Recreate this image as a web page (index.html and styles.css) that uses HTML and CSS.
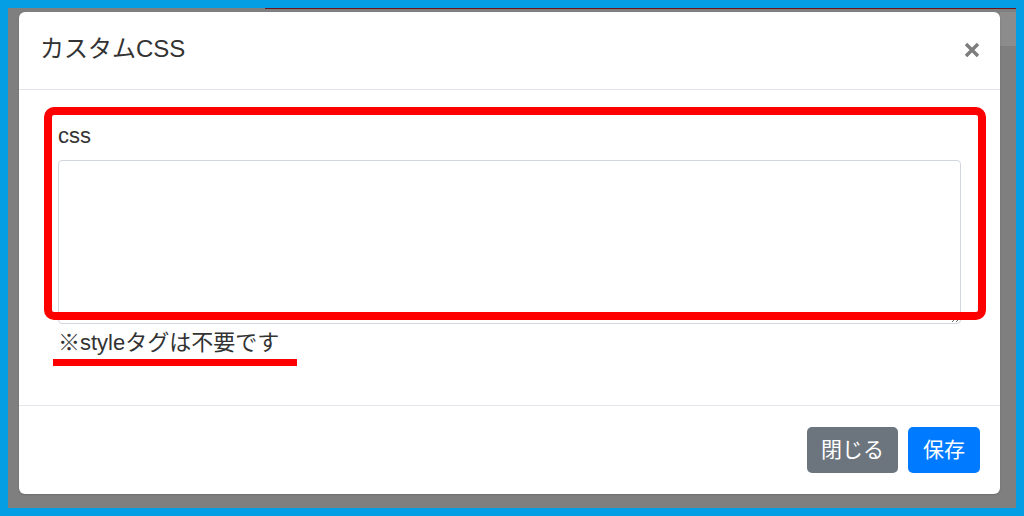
FILE: index.html
```html
<!DOCTYPE html>
<html lang="ja">
<head>
<meta charset="utf-8">
<title>カスタムCSS</title>
<link rel="stylesheet" href="styles.css">
</head>
<body>
<div class="frame">
  <div class="backdrop">
    <div class="modal">
      <div class="modal-header">
        <h5 class="modal-title">カスタムCSS</h5>
        <button class="close" type="button" aria-label="Close">
          <svg width="16" height="16" viewBox="0 0 16 16"><path d="M2 2 L14 14 M14 2 L2 14" stroke="#7d7d7d" stroke-width="3.4" stroke-linecap="butt"/></svg>
        </button>
      </div>
      <div class="modal-body">
        <label class="field-label" for="css">css</label>
        <textarea id="css" class="form-control"></textarea>
        <p class="note">※styleタグは不要です</p>
        <div class="mark-box"></div>
        <div class="mark-line"></div>
      </div>
      <div class="modal-footer">
        <button class="btn btn-secondary" type="button">閉じる</button>
        <button class="btn btn-primary" type="button">保存</button>
      </div>
    </div>
  </div>
</div>
</body>
</html>
```

FILE: styles.css
```css
* { box-sizing: border-box; }
html, body { margin: 0; padding: 0; }
body {
  width: 1024px;
  height: 516px;
  background: #049ee4;
  font-family: "Liberation Sans", "Noto Sans CJK JP", sans-serif;
  color: #212529;
  overflow: hidden;
}
.frame {
  padding: 8px;
  height: 516px;
}
.backdrop {
  height: 500px;
  background:
    linear-gradient(#6e1414, #6e1414) no-repeat 257px 0 / 760px 1px,
    linear-gradient(#8c8c8c, #8c8c8c) no-repeat 992px 4px / 16px 34px,
    #7f7f7f;
  padding: 4px 16px 14px 11px;
}
.modal {
  background: #fff;
  border-radius: 6px;
  width: 981px;
  height: 482px;
  display: flex;
  flex-direction: column;
  box-shadow: 0 1px 2px rgba(0,0,0,0.15);
}
.modal-header {
  height: 78px;
  border-bottom: 1px solid #e3e4ea;
  display: flex;
  align-items: center;
  justify-content: space-between;
  padding: 0 20px 0 21px;
}
.modal-title {
  margin: 0;
  font-size: 24px;
  font-weight: 400;
  line-height: 1.2;
  color: #333;
  padding-bottom: 2px;
}
.close {
  border: 0;
  background: none;
  padding: 0;
  width: 17px;
  height: 17px;
  display: flex;
  align-items: center;
  justify-content: center;
  margin-top: -2px;
  cursor: pointer;
}
.modal-body {
  position: relative;
  flex: 1;
  padding: 29px 39px 0 39px;
  display: flex;
  flex-direction: column;
  border-bottom: 1px solid #e3e6ea;
}
.field-label {
  font-size: 22px;
  line-height: 33px;
  color: #333;
  margin-bottom: 8px;
}
.form-control {
  display: block;
  width: 100%;
  height: 164px;
  border: 1px solid #d2d6e0;
  border-radius: 4px;
  padding: 6px 12px;
  font: inherit;
  resize: vertical;
  background: #fff;
}
.note {
  margin: 2px 0 0 0;
  font-size: 22px;
  line-height: 33px;
  color: #333;
}
.mark-box {
  position: absolute;
  left: 25px;
  top: 17px;
  width: 942px;
  height: 213px;
  border: 8px solid #ff0000;
  border-radius: 10px;
  pointer-events: none;
}
.mark-line {
  position: absolute;
  left: 34px;
  top: 269px;
  width: 244px;
  height: 7px;
  background: #ff0000;
}
.modal-footer {
  height: 88px;
  display: flex;
  align-items: center;
  justify-content: flex-end;
  gap: 10px;
  padding: 0 20px;
}
.btn {
  height: 46px;
  border: 0;
  border-radius: 5px;
  color: #fff;
  font-family: "Liberation Sans", "Noto Sans CJK JP", sans-serif;
  font-size: 21px;
  line-height: 46px;
  padding: 0 14px;
  cursor: pointer;
}
.btn-secondary {
  background: #6c757d;
  width: 91px;
}
.btn-primary {
  background: #007bff;
  width: 72px;
}
```
